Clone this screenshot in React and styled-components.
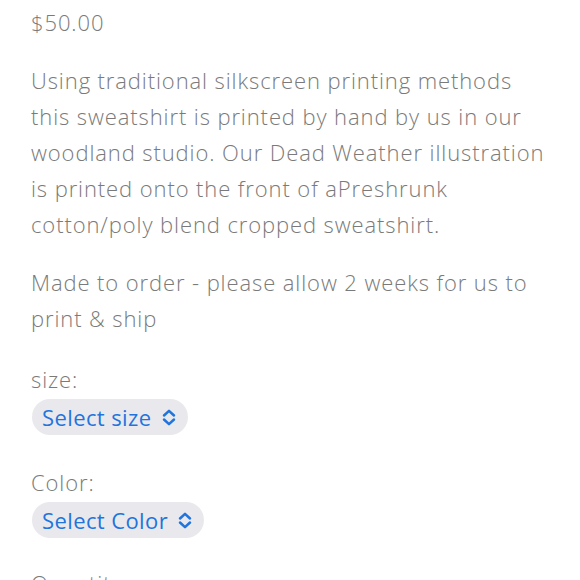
import styled, { createGlobalStyle } from "styled-components";

const GlobalStyle = createGlobalStyle`
  body {
    margin: 0;
    background: #fff;
    font-family: "Open Sans", "Lato", sans-serif;
  }
`;

const Page = styled.div`
  padding: 4px 26px 0 31px;
  color: #7a7a7a;
  font-size: 22px;
  font-weight: 300;
  line-height: 36px;
  letter-spacing: 0.9px;
  height: 580px;
  overflow: hidden;
  box-sizing: border-box;
`;

const Price = styled.div`
  margin-bottom: 22px;
`;

const Text = styled.p`
  margin: 0 0 22px;
`;

const Field = styled.div`
  padding-top: ${(p) => p.$top || 0}px;
`;

const Label = styled.label`
  display: block;
  line-height: 36px;
`;

const Select = styled.button`
  display: inline-flex;
  align-items: center;
  gap: 10px;
  height: 36px;
  margin: 2px 0 0 1px;
  padding: 0 12px 0 10px;
  border: none;
  border-radius: 18px;
  background: #e9e9ed;
  color: #2274dd;
  font: inherit;
  letter-spacing: 0.4px;
  font-weight: 400;
  cursor: pointer;
`;

function Chevrons() {
  return (
    <svg width="14" height="17" viewBox="0 0 14 17" fill="none" stroke="#2274dd" strokeWidth="2.5" strokeLinecap="round" strokeLinejoin="round">
      <path d="M2 6.5 L7 1.8 L12 6.5" />
      <path d="M2 10.5 L7 15.2 L12 10.5" />
    </svg>
  );
}

export default function App() {
  return (
    <>
      <GlobalStyle />
      <Page>
        <Price>$50.00</Price>
        <Text>
          Using traditional silkscreen printing methods this sweatshirt is
          printed by hand by us in our woodland studio. Our Dead Weather
          illustration is printed onto the front of aPreshrunk cotton/poly
          blend cropped sweatshirt.
        </Text>
        <Text>Made to order - please allow 2 weeks for us to print &amp; ship</Text>
        <Field $top={3}>
          <Label>size:</Label>
          <Select>
            Select size <Chevrons />
          </Select>
        </Field>
        <Field $top={29}>
          <Label>Color:</Label>
          <Select>
            Select Color <Chevrons />
          </Select>
        </Field>
        <Field $top={27}>
          <Label>Quantity</Label>
        </Field>
      </Page>
    </>
  );
}
